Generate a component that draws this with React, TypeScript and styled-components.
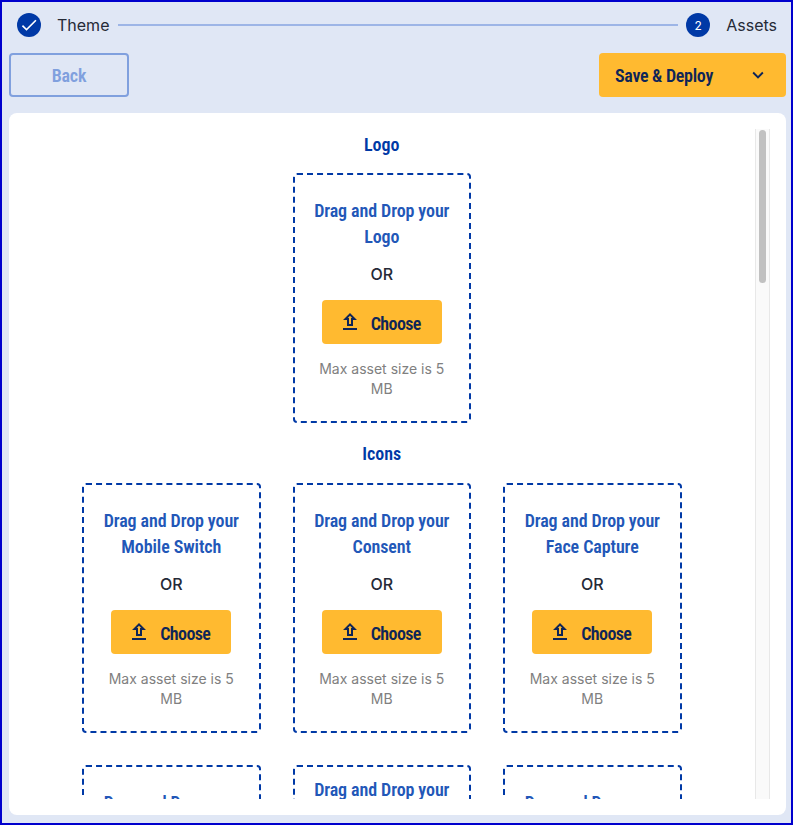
import styled, { createGlobalStyle } from 'styled-components';
import { MdCheck, MdKeyboardArrowDown } from 'react-icons/md';

const CONDENSED = `'Liberation Sans Narrow', 'Roboto Condensed', 'Liberation Sans', sans-serif`;

const GlobalStyle = createGlobalStyle`
	html, body {
		margin: 0;
		padding: 0;
		height: 100%;
	}

	body {
		font-family: Inter, 'Liberation Sans', sans-serif;
	}

	* {
		box-sizing: border-box;
	}
`;

const icons = ['Mobile Switch', 'Consent', 'Face Capture'];
const moreIcons = ['Document Capture', 'Document Capture Front Side', 'Liveness Check'];

function UploadIcon() {
	return (
		<svg width="24" height="24" viewBox="0 0 24 24" fill="currentColor">
			<path d="M9 16h6v-6h4l-7-7-7 7h4v6zm3-10.17L14.17 8H13v6h-2V8H9.83L12 5.83zM5 18h14v2H5z" />
		</svg>
	);
}

function DropCard({ name }: { name: string }) {
	return (
		<Card>
			<CardTitle>Drag and Drop your {name}</CardTitle>
			<Or>OR</Or>
			<ChooseButton>
				<UploadIcon />
				<ChooseLabel>Choose</ChooseLabel>
			</ChooseButton>
			<Hint>Max asset size is 5 MB</Hint>
		</Card>
	);
}

export default function App() {
	return (
		<>
			<GlobalStyle />
			<Page>
				<Stepper>
					<StepCircle>
						<MdCheck size={20} />
					</StepCircle>
					<StepLabel>Theme</StepLabel>
					<StepLine />
					<StepCircle>2</StepCircle>
					<StepLabel>Assets</StepLabel>
				</Stepper>
				<Actions>
					<BackButton disabled>Back</BackButton>
					<DeployButton>
						Save &amp; Deploy
						<MdKeyboardArrowDown size={22} />
					</DeployButton>
				</Actions>
				<Panel>
					<Scroller>
						<SectionTitle>Logo</SectionTitle>
						<LogoRow>
							<DropCard name="Logo" />
						</LogoRow>
						<SectionTitle>Icons</SectionTitle>
						<IconGrid>
							{[...icons, ...moreIcons].map(name => (
								<DropCard key={name} name={name} />
							))}
						</IconGrid>
					</Scroller>
					<ScrollTrack>
						<ScrollThumb />
					</ScrollTrack>
				</Panel>
			</Page>
		</>
	);
}

const Page = styled.div`
	width: 793px;
	height: 825px;
	display: flex;
	flex-direction: column;
	overflow: hidden;
	background: #e0e7f5;
	border: 2px solid #0000cd;
	padding: 11px 5px 8px 7px;
`;

const Stepper = styled.div`
	display: flex;
	align-items: center;
	height: 24px;
	padding: 0 9px 0 8px;
`;

const StepCircle = styled.div`
	width: 24px;
	height: 24px;
	flex: none;
	border-radius: 50%;
	display: flex;
	align-items: center;
	justify-content: center;
	background: #0039a6;
	color: #fff;
	font-size: 12px;
`;

const StepLabel = styled.span`
	margin-left: 16px;
	font-size: 16px;
	color: #252a37;
`;

const StepLine = styled.div`
	flex: 1;
	height: 2px;
	margin: 0 8px 0 9px;
	background: #9db5e6;
`;

const Actions = styled.div`
	display: flex;
	justify-content: space-between;
	margin-top: 16px;
`;

const BackButton = styled.button`
	width: 120px;
	height: 44px;
	border: 2px solid #80a0de;
	border-radius: 4px;
	background: transparent;
	color: #80a0de;
	font-family: ${CONDENSED};
	font-size: 18px;
	font-weight: 600;
	letter-spacing: -0.2px;
`;

const DeployButton = styled.button`
	width: 187px;
	height: 44px;
	border: none;
	border-radius: 4px;
	padding: 0 17px 0 16px;
	display: flex;
	align-items: center;
	justify-content: space-between;
	background: #ffba30;
	color: #0e2558;
	font-family: ${CONDENSED};
	font-size: 18px;
	font-weight: 600;
	letter-spacing: -0.3px;
`;

const Panel = styled.div`
	flex: 1;
	min-height: 0;
	display: flex;
	margin-top: 16px;
	padding: 16px 16px 16px 0;
	border-radius: 8px;
	background: #fff;
`;

const Scroller = styled.div`
	flex: 1;
	min-width: 0;
	overflow: hidden;
	padding-right: 0.5px;
`;

const ScrollTrack = styled.div`
	width: 15px;
	flex: none;
	padding: 1px 3px 0;
	background: #fafafa;
	border-left: 1px solid #e8e8e8;
	border-right: 1px solid #e8e8e8;
`;

const ScrollThumb = styled.div`
	height: 153px;
	border-radius: 4px;
	background: #c1c1c1;
`;

const SectionTitle = styled.h2`
	margin: 0;
	height: 32px;
	line-height: 32px;
	text-align: center;
	font-family: ${CONDENSED};
	font-size: 18px;
	font-weight: 600;
	color: #0039a6;
`;

const LogoRow = styled.div`
	display: flex;
	justify-content: center;
	margin: 12px 0 15px;
`;

const IconGrid = styled.div`
	display: grid;
	grid-template-columns: repeat(3, 178.5px);
	grid-auto-rows: 250px;
	justify-content: center;
	column-gap: 32px;
	row-gap: 32px;
	margin-top: 13px;
`;

const Card = styled.div`
	display: flex;
	flex-direction: column;
	align-items: center;
	justify-content: center;
	height: 250px;
	width: 178.5px;
	padding: 0 16px;
	border: 2px dashed #0039a6;
	border-radius: 4px;
	text-align: center;
`;

const CardTitle = styled.div`
	padding-top: 1px;
	font-family: ${CONDENSED};
	font-size: 18px;
	font-weight: 600;
	line-height: 26px;
	letter-spacing: -0.1px;
	color: #2257b8;
`;

const Or = styled.div`
	margin-top: 14px;
	font-size: 16px;
	font-weight: 500;
	line-height: 20px;
	color: #252a37;
`;

const ChooseButton = styled.button`
	width: 120px;
	height: 44px;
	flex: none;
	margin-top: 16px;
	border: none;
	border-radius: 4px;
	padding: 0 5px 0 0;
	display: flex;
	align-items: center;
	justify-content: center;
	gap: 9px;
	background: #ffba30;
	color: #0e2558;
	font-family: ${CONDENSED};
	font-size: 18px;
	font-weight: 600;
	letter-spacing: -0.6px;
`;

const ChooseLabel = styled.span`
	padding-top: 2px;
`;

const Hint = styled.div`
	margin-top: 15px;
	font-size: 14px;
	line-height: 20px;
	color: #808080;
`;
